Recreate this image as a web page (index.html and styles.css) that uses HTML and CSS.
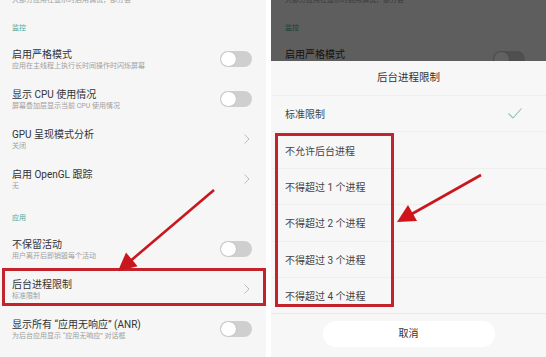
FILE: index.html
```html
<!DOCTYPE html>
<html lang="zh-CN">
<head>
    <meta charset="UTF-8">
    <title>后台进程限制</title>
    <link rel="stylesheet" href="styles.css">
</head>
<body>
    <div class="screen">
        <div class="panel left">
            <div class="list">
                <div class="tail"><div class="sub">大部分应用在显示时启用调试，部分会</div></div>
                <div class="label">监控</div>
                <div class="row">
                    <div><div class="title">启用严格模式</div><div class="sub">应用在主线程上执行长时间操作时闪烁屏幕</div></div>
                    <span class="toggle"></span>
                </div>
                <div class="row">
                    <div><div class="title">显示 CPU 使用情况</div><div class="sub">屏幕叠加层显示当前 CPU 使用情况</div></div>
                    <span class="toggle"></span>
                </div>
                <div class="row">
                    <div><div class="title">GPU 呈现模式分析</div><div class="sub">关闭</div></div>
                    <svg class="chev" width="6" height="10" viewBox="0 0 6 10"><polyline points="0.5,0.5 5,5 0.5,9.5" fill="none" stroke="#bdbdbd" stroke-width="1"/></svg>
                </div>
                <div class="row">
                    <div><div class="title">启用 OpenGL 跟踪</div><div class="sub">无</div></div>
                    <svg class="chev" width="6" height="10" viewBox="0 0 6 10"><polyline points="0.5,0.5 5,5 0.5,9.5" fill="none" stroke="#bdbdbd" stroke-width="1"/></svg>
                </div>
                <div class="label">应用</div>
                <div class="row">
                    <div><div class="title">不保留活动</div><div class="sub">用户离开后即销毁每个活动</div></div>
                    <span class="toggle"></span>
                </div>
                <div class="row boxed">
                    <div><div class="title">后台进程限制</div><div class="sub">标准限制</div></div>
                    <svg class="chev" width="6" height="10" viewBox="0 0 6 10"><polyline points="0.5,0.5 5,5 0.5,9.5" fill="none" stroke="#bdbdbd" stroke-width="1"/></svg>
                </div>
                <div class="row">
                    <div><div class="title">显示所有 “应用无响应” (ANR)</div><div class="sub">为后台应用显示 “应用无响应” 对话框</div></div>
                    <span class="toggle"></span>
                </div>
            </div>
        </div>

        <div class="panel right">
            <div class="list shift">
                <div class="tail"><div class="sub">大部分应用在显示时启用调试，部分会</div></div>
                <div class="label">监控</div>
                <div class="row">
                    <div><div class="title">启用严格模式</div><div class="sub">应用在主线程上执行长时间操作时闪烁屏幕</div></div>
                    <span class="toggle"></span>
                </div>
            </div>
            <div class="scrim"></div>

            <div class="sheet">
                <div class="sheet-title">后台进程限制</div>
                <div class="opt">
                    <span>标准限制</span>
                    <svg width="14" height="11" viewBox="0 0 14 11"><polyline points="0.5,5.5 5,10 13.5,0.5" fill="none" stroke="#86c6bb" stroke-width="1.1"/></svg>
                </div>
                <div class="picked">
                    <div class="opt">不允许后台进程</div>
                    <div class="opt">不得超过 1 个进程</div>
                    <div class="opt">不得超过 2 个进程</div>
                    <div class="opt">不得超过 3 个进程</div>
                    <div class="opt">不得超过 4 个进程</div>
                </div>
                <div class="foot">
                    <div class="cancel">取消</div>
                </div>
            </div>
        </div>

        <!-- red annotation arrows -->
        <svg class="marks" width="546" height="357" viewBox="0 0 546 357">
            <line x1="214" y1="190" x2="128" y2="263" stroke="#c9171e" stroke-width="2.6"/>
            <polygon points="118,271 137.6,266.3 126,252.5" fill="#c9171e"/>
            <line x1="481" y1="175" x2="410" y2="215" stroke="#c9171e" stroke-width="2.6"/>
            <polygon points="397,222 417,221 408,205" fill="#d0141c"/>
        </svg>
    </div>
</body>
</html>
```

FILE: styles.css
```css
* {
    box-sizing: border-box;
}

body {
    margin: 0;
    font-family: Roboto, "Noto Sans CJK SC", sans-serif;
    background-color: #fff;
}

.screen {
    position: relative;
    display: flex;
    gap: 5px;
    width: 546px;
    height: 357px;
    overflow: hidden;
}

.panel {
    position: relative;
    background-color: #f6f6f6;
    overflow: hidden;
}

.left {
    width: 266px;
}

.right {
    flex: 1;
}

.list {
    padding: 0 14px 0 12px;
}

.list.shift {
    padding-left: 14px;
    padding-right: 21px;
}

.tail {
    height: 14px;
}

.tail .sub {
    margin-top: -5px;
}

.label {
    height: 30px;
    padding-top: 14px;
    font-size: 7px;
    line-height: 10px;
    color: #4fa796;
}

.row {
    position: relative;
    height: 40px;
    display: flex;
    align-items: center;
    justify-content: space-between;
}

.title {
    font-size: 10px;
    line-height: 13px;
    color: #333;
}

.sub {
    font-size: 7px;
    line-height: 10px;
    color: #a0a0a0;
    white-space: nowrap;
}

.toggle {
    position: relative;
    width: 32px;
    height: 16px;
    border-radius: 8px;
    background-color: #cfcfcf;
}

.toggle::before {
    content: "";
    position: absolute;
    left: 1px;
    top: 1px;
    width: 15px;
    height: 14px;
    border-radius: 7px;
    background-color: #fff;
    box-shadow: 0 0 1px rgba(0, 0, 0, 0.25);
}

.chev {
    margin-right: 2px;
}

.boxed::after {
    content: "";
    position: absolute;
    left: -10px;
    right: -14px;
    top: -1px;
    bottom: 3px;
    border: 3px solid #c4232b;
}

.scrim {
    position: absolute;
    inset: 0;
    background-color: rgba(0, 0, 0, 0.62);
}

.sheet {
    position: absolute;
    left: 0;
    right: 0;
    top: 61px;
    bottom: 0;
    background-color: #f7f7f7;
}

.sheet-title {
    height: 34px;
    line-height: 34px;
    text-align: center;
    font-size: 10.5px;
    color: #333;
}

.opt {
    height: 36.4px;
    display: flex;
    align-items: center;
    justify-content: space-between;
    padding: 0 24px 0 14px;
    font-size: 10px;
    color: #444;
    border-top: 1px solid #efefef;
}

.picked {
    position: relative;
}

.picked::after {
    content: "";
    position: absolute;
    left: 4px;
    width: 113px;
    top: 2px;
    bottom: 6px;
    border: 3px solid #c4232b;
}

.foot {
    border-top: 1px solid #e9e9e9;
    padding-top: 7px;
}

.cancel {
    width: 172px;
    height: 26px;
    margin: 0 auto;
    border-radius: 13px;
    background-color: #fff;
    text-align: center;
    line-height: 26px;
    font-size: 10px;
    color: #333;
}

.marks {
    position: absolute;
    left: 0;
    top: 0;
    pointer-events: none;
}
```
